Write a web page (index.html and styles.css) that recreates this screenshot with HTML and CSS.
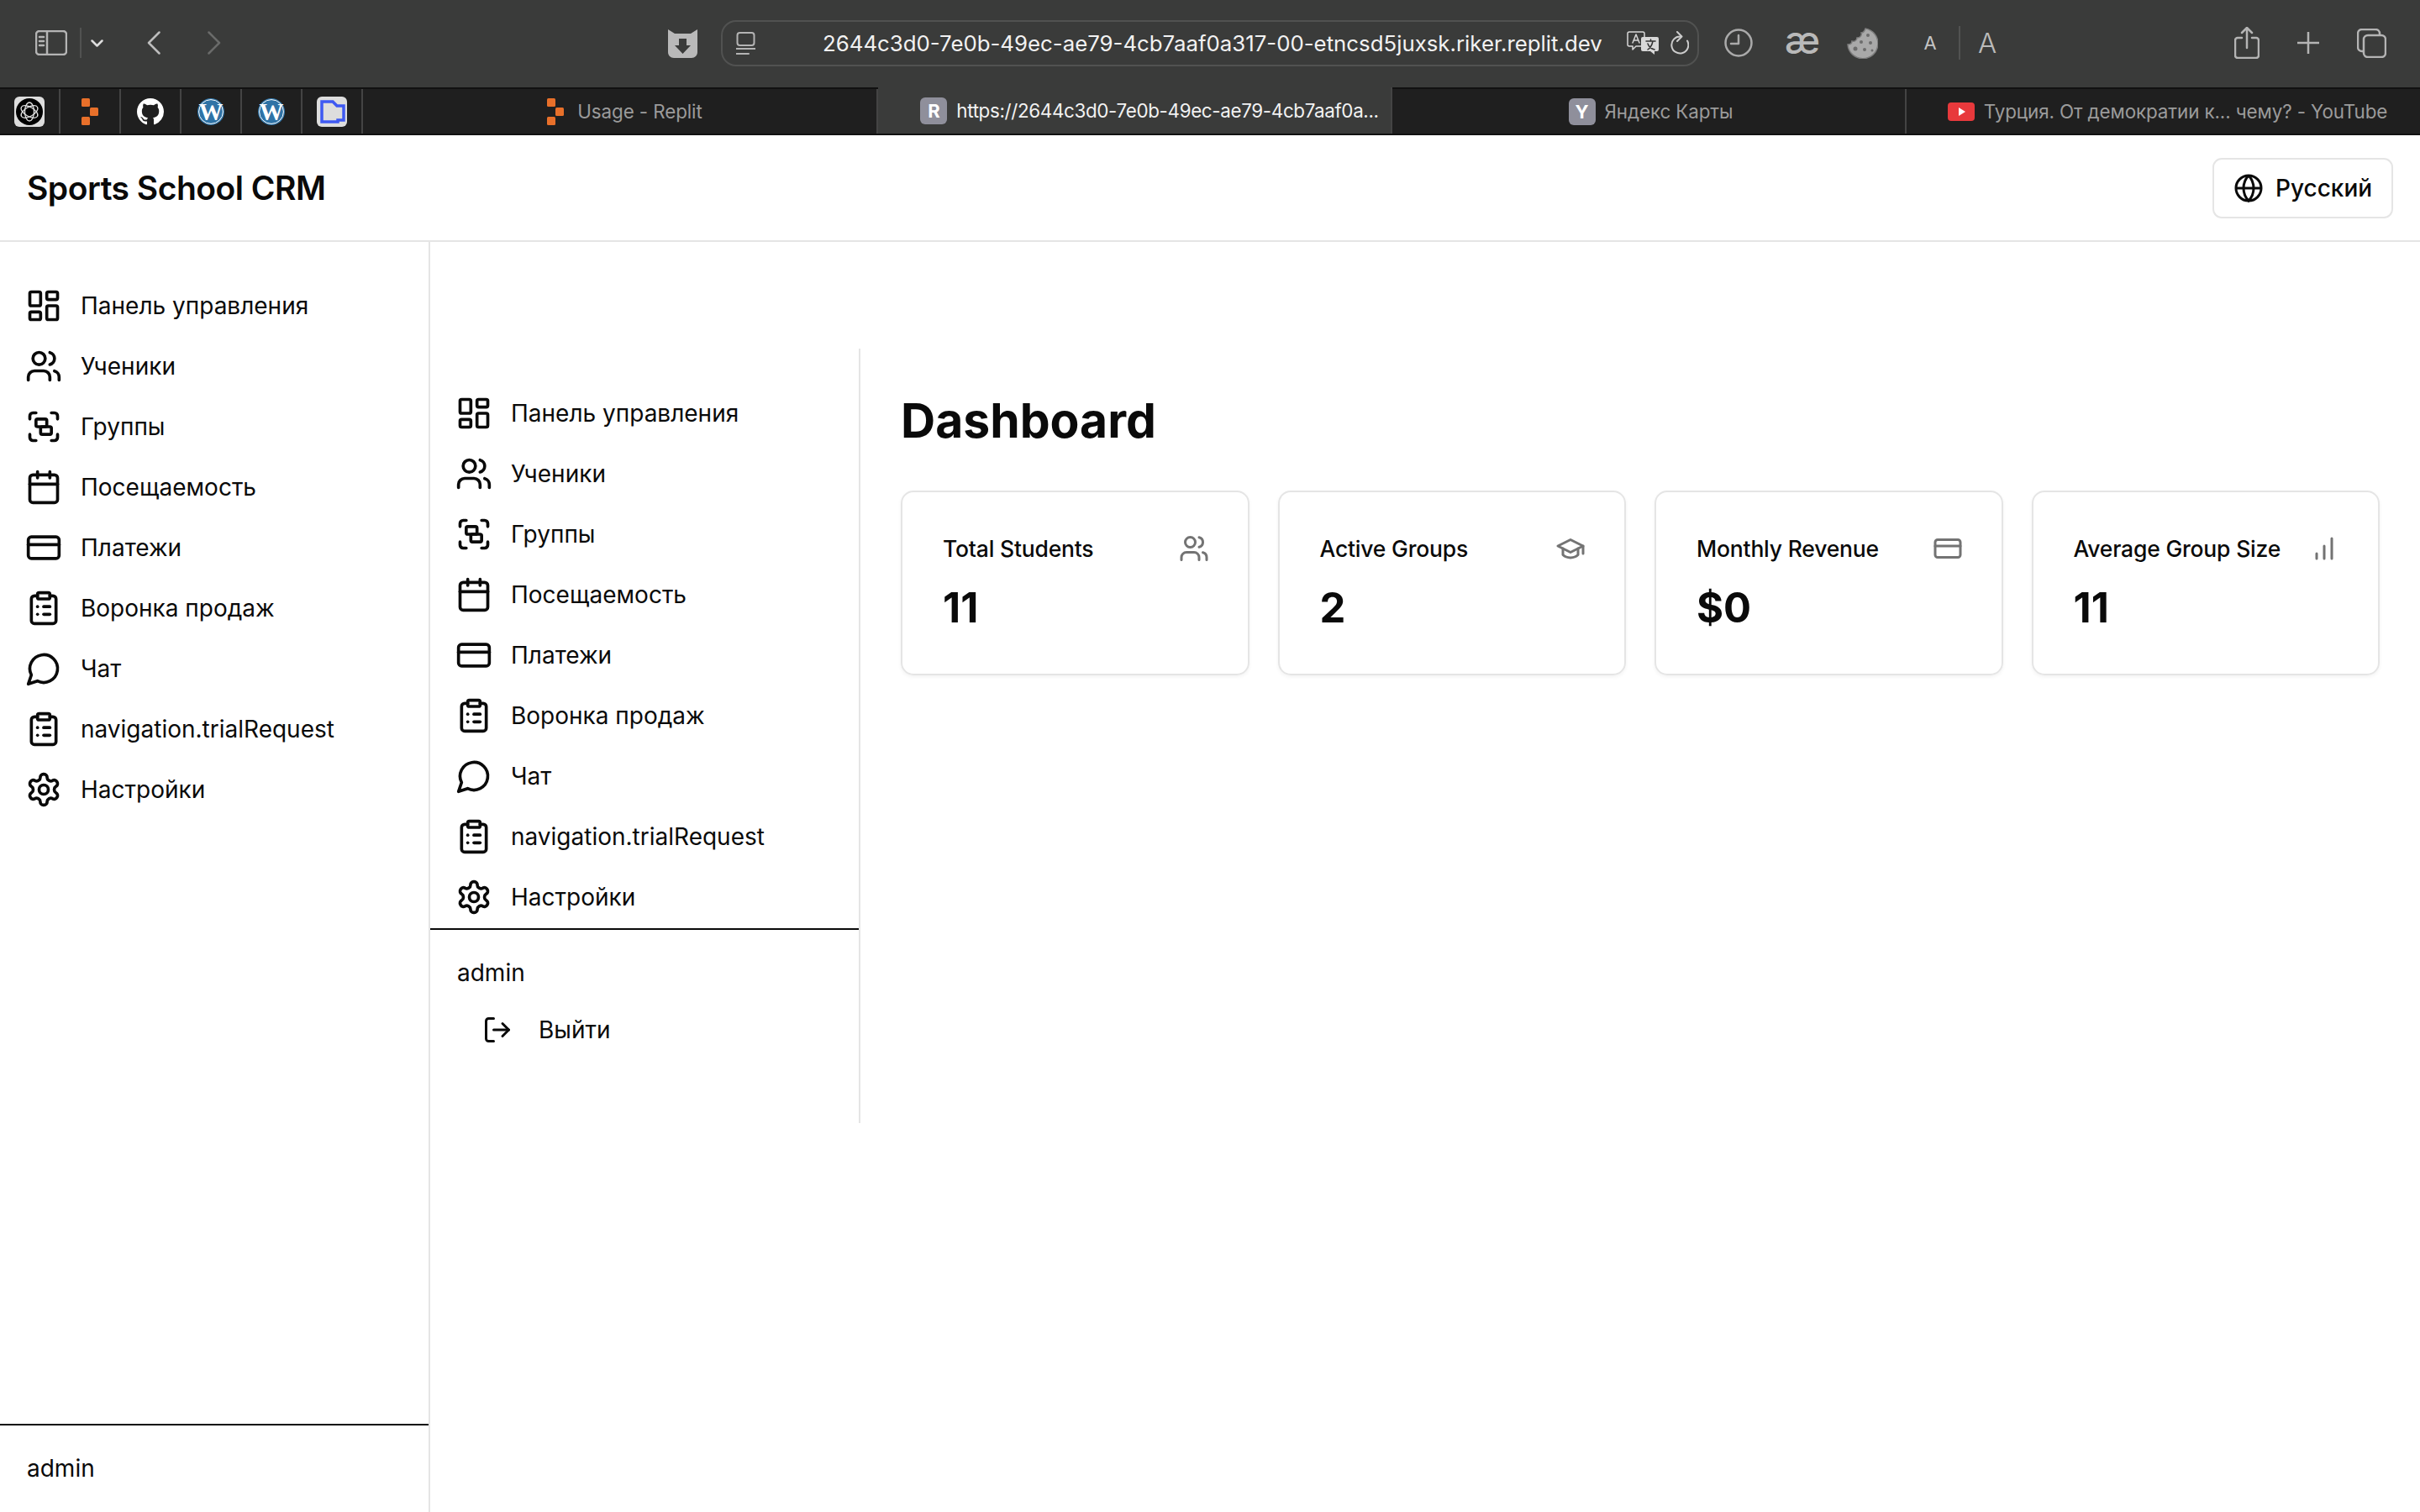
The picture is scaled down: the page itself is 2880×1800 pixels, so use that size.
FILE: index.html
```html
<!DOCTYPE html>
<html lang="ru">
<head>
    <meta charset="UTF-8">
    <title>Sports School CRM</title>
    <link rel="stylesheet" href="styles.css">
</head>
<body>
<svg class="sprite" xmlns="http://www.w3.org/2000/svg">
    <symbol id="i-dashboard" viewBox="0 0 24 24"><rect x="3" y="3" width="7" height="9" rx="1"/><rect x="14" y="3" width="7" height="5" rx="1"/><rect x="14" y="12" width="7" height="9" rx="1"/><rect x="3" y="16" width="7" height="5" rx="1"/></symbol>
    <symbol id="i-users" viewBox="0 0 24 24"><path d="M16 21v-2a4 4 0 0 0-4-4H6a4 4 0 0 0-4 4v2"/><circle cx="9" cy="7" r="4"/><path d="M22 21v-2a4 4 0 0 0-3-3.87"/><path d="M16 3.13a4 4 0 0 1 0 7.75"/></symbol>
    <symbol id="i-group" viewBox="0 0 24 24"><path d="M3 7V5c0-1.1.9-2 2-2h2"/><path d="M17 3h2c1.1 0 2 .9 2 2v2"/><path d="M21 17v2c0 1.1-.9 2-2 2h-2"/><path d="M7 21H5c-1.1 0-2-.9-2-2v-2"/><rect x="7" y="7" width="7" height="5" rx="1"/><rect x="10" y="12" width="7" height="5" rx="1"/></symbol>
    <symbol id="i-calendar" viewBox="0 0 24 24"><path d="M8 2v4"/><path d="M16 2v4"/><rect x="3" y="4" width="18" height="18" rx="2"/><path d="M3 10h18"/></symbol>
    <symbol id="i-card" viewBox="0 0 24 24"><rect x="2" y="5" width="20" height="14" rx="2"/><path d="M2 10h20"/></symbol>
    <symbol id="i-clipboard" viewBox="0 0 24 24"><rect x="8" y="2" width="8" height="4" rx="1"/><path d="M16 4h2a2 2 0 0 1 2 2v14a2 2 0 0 1-2 2H6a2 2 0 0 1-2-2V6a2 2 0 0 1 2-2h2"/><path d="M12 11h4"/><path d="M12 16h4"/><path d="M8 11h.01"/><path d="M8 16h.01"/></symbol>
    <symbol id="i-chat" viewBox="0 0 24 24"><path d="M7.9 20A9 9 0 1 0 4 16.1L2 22Z"/></symbol>
    <symbol id="i-settings" viewBox="0 0 24 24"><path d="M12.22 2h-.44a2 2 0 0 0-2 2v.18a2 2 0 0 1-1 1.73l-.43.25a2 2 0 0 1-2 0l-.15-.08a2 2 0 0 0-2.73.73l-.22.38a2 2 0 0 0 .73 2.73l.15.1a2 2 0 0 1 1 1.72v.51a2 2 0 0 1-1 1.74l-.15.09a2 2 0 0 0-.73 2.73l.22.38a2 2 0 0 0 2.73.73l.15-.08a2 2 0 0 1 2 0l.43.25a2 2 0 0 1 1 1.73V20a2 2 0 0 0 2 2h.44a2 2 0 0 0 2-2v-.18a2 2 0 0 1 1-1.73l.43-.25a2 2 0 0 1 2 0l.15.08a2 2 0 0 0 2.73-.73l.22-.39a2 2 0 0 0-.73-2.73l-.15-.08a2 2 0 0 1-1-1.74v-.5a2 2 0 0 1 1-1.74l.15-.09a2 2 0 0 0 .73-2.73l-.22-.38a2 2 0 0 0-2.73-.73l-.15.08a2 2 0 0 1-2 0l-.43-.25a2 2 0 0 1-1-1.73V4a2 2 0 0 0-2-2z"/><circle cx="12" cy="12" r="3"/></symbol>
    <symbol id="i-logout" viewBox="0 0 24 24"><path d="M9 21H5a2 2 0 0 1-2-2V5a2 2 0 0 1 2-2h4"/><path d="M16 17l5-5-5-5"/><path d="M21 12H9"/></symbol>
    <symbol id="i-globe" viewBox="0 0 24 24"><circle cx="12" cy="12" r="10"/><path d="M12 2a14.5 14.5 0 0 0 0 20 14.5 14.5 0 0 0 0-20"/><path d="M2 12h20"/></symbol>
    <symbol id="i-cap" viewBox="0 0 24 24"><path d="M22 10v6"/><path d="M2 10l10-5 10 5-10 5z"/><path d="M6 12v5c3 3 9 3 12 0v-5"/></symbol>
    <symbol id="i-bars" viewBox="0 0 24 24"><path d="M12 20V10"/><path d="M18 20V4"/><path d="M6 20v-4"/></symbol>
    <symbol id="i-replit" viewBox="0 0 20 32"><rect x="0" y="0" width="10" height="10" rx="1.5"/><rect x="10" y="11" width="10" height="10" rx="1.5"/><rect x="0" y="22" width="10" height="10" rx="1.5"/></symbol>
    <symbol id="i-wp" viewBox="0 0 32 32"><circle cx="16" cy="16" r="16" fill="#2f73a6"/><circle cx="16" cy="16" r="14.4" fill="none" stroke="#fff" stroke-width="1"/><text x="16" y="25.500" text-anchor="middle" class="wp-letter">W</text></symbol>
</svg>

<div class="toolbar">
    <svg class="tb tb-sidebar" viewBox="0 0 38 30"><rect x="1" y="1" width="36" height="28" rx="4"/><path d="M14 1v28"/><path d="M5 8h5M5 13h5M5 18h5"/></svg>
    <span class="tb-sep"></span>
    <svg class="tb tb-chevron" viewBox="0 0 15 9"><path d="M1.5 1.5l6 6 6-6"/></svg>
    <svg class="tb tb-back" viewBox="0 0 16 28"><path d="M14.5 1.5L2 14l12.5 12.5"/></svg>
    <svg class="tb tb-forward" viewBox="0 0 16 28"><path d="M1.5 1.5L14 14 1.5 26.500"/></svg>
    <svg class="tb-fill tb-shield" viewBox="0 0 35 35"><path d="M0 1l8 5h19l8-5v27c0 4-3 7-7 7H7c-4 0-7-3-7-7z"/><path class="cut" d="M13 12h9v8h5l-9.500 10L8 20h5z"/></svg>
    <div class="urlbar">
        <svg class="tb tb-site" viewBox="0 0 23 27"><rect x="1.500" y="1" width="20" height="15" rx="3"/><path d="M0 20h23M0 26h15"/></svg>
        <span class="url">2644c3d0-7e0b-49ec-ae79-4cb7aaf0a317-00-etncsd5juxsk.riker.replit.dev</span>
        <svg class="tb tb-translate" viewBox="0 0 38 28"><path d="M3 1h16a2 2 0 0 1 2 2v13a2 2 0 0 1-2 2H11l-4 4v-4H3a2 2 0 0 1-2-2V3a2 2 0 0 1 2-2z"/><path class="solid" d="M19 7h17a2 2 0 0 1 2 2v13a2 2 0 0 1-2 2h-3v4l-5-4h-9a2 2 0 0 1-2-2V9a2 2 0 0 1 2-2z"/><path class="ink" d="M23 12h11M28.500 10v2M25 22c3-2 5-5 6-10M25 15c1 3 4 6 8 7"/><path d="M7 14l4-10 4 10M8.500 11h5"/></svg>
        <svg class="tb tb-reload" viewBox="0 0 23 28"><path d="M13 6.500a10 10 0 1 0 8 5"/><path d="M9 1l5.500 5.500L9 12"/></svg>
    </div>
    <svg class="tb tb-clock" viewBox="0 0 34 34"><circle cx="17" cy="17" r="15.500"/><path d="M17 8v10H8"/></svg>
    <span class="tb-ae">æ</span>
    <svg class="tb-cookie" viewBox="0 0 37 37"><path class="cookie-body" d="M22 1a18 18 0 1 1-21 19c3 0 5-1 5-4 3 1 6-1 6-4 4 0 6-3 5-6 2 0 4-2 5-5z"/><circle cx="25" cy="9" r="2"/><circle cx="17" cy="17" r="2"/><circle cx="28" cy="18" r="2"/><circle cx="10" cy="25" r="2.500"/><circle cx="21" cy="26" r="2"/><circle cx="30" cy="27" r="1.500"/></svg>
    <span class="tb-a-small">A</span>
    <span class="tb-sep tb-sep-font"></span>
    <span class="tb-a-big">A</span>
    <svg class="tb tb-share" viewBox="0 0 30 38"><path d="M9 13H4a3 3 0 0 0-3 3v18a3 3 0 0 0 3 3h22a3 3 0 0 0 3-3V16a3 3 0 0 0-3-3h-5"/><path d="M15 25V1M9 7l6-6 6 6"/></svg>
    <svg class="tb tb-plus" viewBox="0 0 26 26"><path d="M13 0v26M0 13h26"/></svg>
    <svg class="tb tb-tabs" viewBox="0 0 35 35"><rect x="1" y="1" width="26" height="26" rx="5"/><rect class="solid-bg" x="8" y="8" width="26" height="26" rx="5"/></svg>
</div>

<div class="tabbar">
    <div class="pin">
        <span class="tile tile-light">
            <svg class="gpt" viewBox="0 0 32 32"><circle cx="16" cy="16" r="16" fill="#000"/><g fill="none" stroke="#ddd" stroke-width="1.300"><ellipse cx="16" cy="16" rx="5.500" ry="11"/><ellipse cx="16" cy="16" rx="5.500" ry="11" transform="rotate(60 16 16)"/><ellipse cx="16" cy="16" rx="5.500" ry="11" transform="rotate(120 16 16)"/></g></svg>
        </span>
    </div>
    <div class="pin"><svg class="replit-pin"><use href="#i-replit"/></svg></div>
    <div class="pin">
        <svg class="github" viewBox="0 0 16 16"><path d="M8 0C3.580 0 0 3.580 0 8c0 3.540 2.290 6.530 5.470 7.590.4.070.55-.170.55-.380 0-.190-.010-.820-.010-1.490-2.010.370-2.530-.490-2.690-.940-.090-.230-.480-.940-.820-1.130-.280-.150-.680-.520-.010-.530.630-.010 1.080.580 1.230.820.720 1.210 1.870.870 2.330.660.070-.520.280-.870.510-1.070-1.780-.2-3.640-.890-3.640-3.950 0-.870.310-1.590.82-2.150-.08-.2-.360-1.020.08-2.120 0 0 .670-.210 2.200.820.640-.180 1.320-.270 2-.270.680 0 1.360.090 2 .270 1.530-1.040 2.200-.820 2.200-.820.440 1.100.160 1.920.08 2.120.510.560.820 1.270.820 2.150 0 3.070-1.870 3.750-3.650 3.950.290.250.540.730.540 1.480 0 1.070-.010 1.930-.010 2.200 0 .210.150.460.550.380A8.013 8.013 0 0016 8c0-4.420-3.580-8-8-8z"/></svg>
    </div>
    <div class="pin"><svg class="wp"><use href="#i-wp"/></svg></div>
    <div class="pin"><svg class="wp"><use href="#i-wp"/></svg></div>
    <div class="pin">
        <span class="tile tile-light">
            <svg class="folder" viewBox="0 0 36 36"><path d="M6 6h13l5 5h8v17l-7 0v2H6z"/></svg>
        </span>
    </div>
    <div class="tab tab-usage"><svg class="replit-tab"><use href="#i-replit"/></svg><span>Usage - Replit</span></div>
    <div class="tab tab-active"><span class="letter">R</span><span>https://2644c3d0-7e0b-49ec-ae79-4cb7aaf0a...</span></div>
    <div class="tab tab-maps"><span class="letter">Y</span><span>Яндекс Карты</span></div>
    <div class="tab tab-last">
        <svg class="yt" viewBox="0 0 32 22"><rect width="32" height="22" rx="4" fill="#e8393c"/><path d="M13 6l8 5-8 5z" fill="#fff"/></svg>
        <span>Турция. От демократии к... чему? - YouTube</span>
    </div>
</div>

<header class="app-header">
    <h1 class="brand">Sports School CRM</h1>
    <button class="lang-btn" type="button"><svg class="icon-globe"><use href="#i-globe"/></svg>Русский</button>
</header>

<div class="layout">
    <aside class="sidebar">
        <nav class="nav">
            <a class="nav-item"><svg class="icon"><use href="#i-dashboard"/></svg>Панель управления</a>
            <a class="nav-item"><svg class="icon"><use href="#i-users"/></svg>Ученики</a>
            <a class="nav-item"><svg class="icon"><use href="#i-group"/></svg>Группы</a>
            <a class="nav-item"><svg class="icon"><use href="#i-calendar"/></svg>Посещаемость</a>
            <a class="nav-item"><svg class="icon"><use href="#i-card"/></svg>Платежи</a>
            <a class="nav-item"><svg class="icon"><use href="#i-clipboard"/></svg>Воронка продаж</a>
            <a class="nav-item"><svg class="icon"><use href="#i-chat"/></svg>Чат</a>
            <a class="nav-item"><svg class="icon"><use href="#i-clipboard"/></svg>navigation.trialRequest</a>
            <a class="nav-item"><svg class="icon"><use href="#i-settings"/></svg>Настройки</a>
        </nav>
        <div class="side-footer side-footer-short">
            <div class="user">admin</div>
        </div>
    </aside>

    <div class="page">
        <div class="page-inner">
            <aside class="sidebar sidebar-inner">
                <nav class="nav">
                    <a class="nav-item"><svg class="icon"><use href="#i-dashboard"/></svg>Панель управления</a>
                    <a class="nav-item"><svg class="icon"><use href="#i-users"/></svg>Ученики</a>
                    <a class="nav-item"><svg class="icon"><use href="#i-group"/></svg>Группы</a>
                    <a class="nav-item"><svg class="icon"><use href="#i-calendar"/></svg>Посещаемость</a>
                    <a class="nav-item"><svg class="icon"><use href="#i-card"/></svg>Платежи</a>
                    <a class="nav-item"><svg class="icon"><use href="#i-clipboard"/></svg>Воронка продаж</a>
                    <a class="nav-item"><svg class="icon"><use href="#i-chat"/></svg>Чат</a>
                    <a class="nav-item"><svg class="icon"><use href="#i-clipboard"/></svg>navigation.trialRequest</a>
                    <a class="nav-item"><svg class="icon"><use href="#i-settings"/></svg>Настройки</a>
                </nav>
                <div class="side-footer">
                    <div class="user">admin</div>
                    <a class="logout"><svg class="icon-logout"><use href="#i-logout"/></svg>Выйти</a>
                </div>
            </aside>

            <main class="main">
                <h2 class="title">Dashboard</h2>
                <div class="cards">
                    <div class="card">
                        <div class="card-head"><span>Total Students</span><svg class="card-icon"><use href="#i-users"/></svg></div>
                        <div class="card-value">11</div>
                    </div>
                    <div class="card">
                        <div class="card-head"><span>Active Groups</span><svg class="card-icon"><use href="#i-cap"/></svg></div>
                        <div class="card-value">2</div>
                    </div>
                    <div class="card">
                        <div class="card-head"><span>Monthly Revenue</span><svg class="card-icon"><use href="#i-card"/></svg></div>
                        <div class="card-value">$0</div>
                    </div>
                    <div class="card">
                        <div class="card-head"><span>Average Group Size</span><svg class="card-icon"><use href="#i-bars"/></svg></div>
                        <div class="card-value">11</div>
                    </div>
                </div>
            </main>
        </div>
    </div>
</div>
</body>
</html>
```

FILE: styles.css
```css
* {
    box-sizing: border-box;
}
html, body {
    margin: 0;
    height: 100%;
}
body {
    width: 2880px;
    height: 1800px;
    overflow: hidden;
    background: #fff;
    color: #0a0a0a;
    font-family: Inter, "Noto Sans", sans-serif;
}
.sprite {
    display: none;
}

/* browser chrome */
.toolbar {
    display: flex;
    align-items: center;
    height: 106px;
    padding: 0 0 2px 42px;
    background: #3a3b3a;
    border-bottom: 2px solid #111;
}
.tb {
    flex: none;
    fill: none;
    stroke: #b4b4b4;
    stroke-width: 2.5;
    stroke-linecap: round;
    stroke-linejoin: round;
}
.tb-fill {
    flex: none;
    fill: #b9b9b9;
}
.tb-sidebar { width: 38px; height: 30px; }
.tb-sep {
    flex: none;
    width: 2px;
    height: 36px;
    margin-left: 15px;
    background: #515251;
}
.tb-chevron { width: 15px; height: 9px; margin-left: 11px; stroke: #ddd; }
.tb-back { width: 16px; height: 28px; margin-left: 52px; stroke: #bdbdbd; }
.tb-forward { width: 16px; height: 28px; margin-left: 56px; stroke: #6a6b6a; }
.tb-shield { width: 35px; height: 35px; margin-left: 532px; }
.tb-shield .cut { fill: #3a3b3a; }
.urlbar {
    flex: none;
    display: flex;
    align-items: center;
    width: 1164px;
    height: 55px;
    margin-left: 28px;
    padding-left: 16px;
    border: 2px solid #515251;
    border-radius: 18px;
}
.tb-site { width: 23px; height: 27px; stroke-width: 2; }
.url {
    flex: none;
    width: 926px;
    margin-left: 80px;
    color: #f2f2f2;
    font-size: 25.800px;
    white-space: nowrap;
}
.tb-translate { width: 38px; height: 28px; margin-left: 31px; stroke-width: 1.500; stroke: #d8d8d8; }
.tb-translate .solid { fill: #d8d8d8; stroke: none; }
.tb-translate .ink { stroke: #333; stroke-width: 1.500; }
.tb-reload { width: 23px; height: 28px; margin-left: 13px; stroke-width: 2; stroke: #ccc; }
.tb-clock { width: 34px; height: 34px; margin-left: 30px; stroke: #aaa; }
.tb-ae {
    flex: none;
    width: 36px;
    margin-left: 38px;
    color: #b9b9b9;
    font-size: 46px;
    font-weight: 500;
    line-height: 46px;
    text-align: center;
    position: relative;
    top: -4px;
}
.tb-cookie { flex: none; width: 37px; height: 37px; margin-left: 38px; fill: #6c6c6c; }
.tb-cookie .cookie-body { fill: #a9a9a9; stroke: #7d7d7d; stroke-width: 1.500; }
.tb-a-small {
    flex: none;
    width: 16px;
    margin-left: 54px;
    color: #c4c4c4;
    font-size: 22px;
    text-align: center;
}
.tb-sep-font { height: 40px; margin-left: 26px; }
.tb-a-big {
    flex: none;
    width: 22px;
    margin-left: 21px;
    color: #bbb;
    font-size: 33px;
    font-weight: 300;
    text-align: center;
}
.tb-share { width: 30px; height: 38px; margin-left: 283px; }
.tb-plus { width: 26px; height: 26px; margin-left: 45px; }
.tb-tabs { width: 35px; height: 35px; margin-left: 45px; }
.tb-tabs .solid-bg { fill: #3a3b3a; }

.tabbar {
    display: flex;
    height: 55px;
    background: #1f1f1f;
    border-bottom: 2px solid #111;
}
.pin {
    flex: none;
    display: flex;
    align-items: center;
    justify-content: center;
    width: 72px;
    border-right: 2px solid #444;
}
.tile {
    display: flex;
    align-items: center;
    justify-content: center;
    width: 36px;
    height: 36px;
    background: #ddd;
    border-radius: 6px;
}
.gpt { width: 32px; height: 32px; }
.folder { width: 36px; height: 36px; fill: none; stroke: #3e59f2; stroke-width: 3.500; }
.replit-pin { width: 20px; height: 32px; fill: #e8702a; }
.replit-tab { width: 20px; height: 32px; fill: #e8702a; }
.github { width: 32px; height: 32px; fill: #fff; }
.wp { width: 32px; height: 32px; }
.wp-letter {
    fill: #fff;
    font-family: "Liberation Serif", serif;
    font-size: 29px;
    font-weight: 700;
}
.tab {
    flex: none;
    display: flex;
    align-items: center;
    justify-content: center;
    gap: 11px;
    width: 612px;
    color: #9b9b9b;
    font-size: 22.400px;
    letter-spacing: -0.1px;
    white-space: nowrap;
    border-right: 2px solid #444;
}
.tab-usage {
    width: 613px;
    gap: 16px;
    padding-left: 12px;
}
.tab-active {
    background: #3a3b3a;
    color: #f2f2f2;
    margin-top: -2px;
    padding-left: 36px;
    letter-spacing: -0.35px;
}
.tab-maps {
    padding-left: 5px;
}
.tab-last {
    width: auto;
    flex: 1;
    padding-left: 10px;
    border-right: none;
}
.letter {
    display: flex;
    align-items: center;
    justify-content: center;
    width: 32px;
    height: 32px;
    background: #8f8f9b;
    border-radius: 6px;
    color: #fff;
    font-size: 22px;
    font-weight: 700;
}
.yt { width: 32px; height: 22px; }

/* app header */
.app-header {
    display: flex;
    align-items: center;
    justify-content: space-between;
    height: 127px;
    padding: 0 32px;
    border-bottom: 2px solid #e5e5e5;
}
.brand {
    margin: 0;
    font-size: 39px;
    font-weight: 600;
    letter-spacing: -0.5px;
}
.lang-btn {
    display: flex;
    align-items: center;
    gap: 14px;
    width: 215px;
    height: 72px;
    padding: 0 0 0 23px;
    background: #fff;
    border: 2px solid #e5e5e5;
    border-radius: 11px;
    color: #0a0a0a;
    font-family: inherit;
    font-size: 28px;
    font-weight: 500;
}
.icon-globe {
    width: 36px;
    height: 36px;
    fill: none;
    stroke: #0a0a0a;
    stroke-width: 2;
    flex: none;
}

/* layout */
.layout {
    display: flex;
    height: 1512px;
}
.sidebar {
    flex: none;
    display: flex;
    flex-direction: column;
    width: 512px;
    border-right: 2px solid #e5e5e5;
}
.sidebar-inner {
    height: 922px;
}
.nav {
    flex: 1;
    padding-top: 40px;
}
.sidebar-inner .nav {
    padding-top: 41px;
}
.nav-item {
    display: flex;
    align-items: center;
    gap: 22px;
    height: 72px;
    padding-left: 30px;
    font-size: 28px;
    white-space: nowrap;
}
.icon {
    flex: none;
    width: 44px;
    height: 44px;
    fill: none;
    stroke: #0a0a0a;
    stroke-width: 2;
    stroke-linecap: round;
    stroke-linejoin: round;
}
.side-footer {
    flex: none;
    height: 232px;
    padding: 31px 32px 0;
    border-top: 2px solid #0a0a0a;
    font-size: 28px;
}
.side-footer-short {
    height: 105px;
}
.user {
    line-height: 40px;
}
.logout {
    display: flex;
    align-items: center;
    gap: 31px;
    height: 36px;
    margin-top: 30px;
    padding-left: 30px;
}
.icon-logout {
    flex: none;
    width: 36px;
    height: 36px;
    fill: none;
    stroke: #0a0a0a;
    stroke-width: 2;
    stroke-linecap: round;
    stroke-linejoin: round;
}
.page {
    flex: 1;
    padding-top: 127px;
}
.page-inner {
    display: flex;
    align-items: flex-start;
}
.main {
    flex: 1;
    padding: 0 48px;
}
.title {
    margin: 52px 0 49px;
    font-size: 57px;
    font-weight: 700;
    line-height: 68px;
}
.cards {
    display: grid;
    grid-template-columns: repeat(4, 1fr);
    gap: 34px;
}
.card {
    height: 220px;
    padding: 48px 46px 0 48px;
    border: 2px solid #e5e5e5;
    border-radius: 15px;
    box-shadow: 0 2px 4px rgba(0, 0, 0, 0.05);
}
.card-head {
    display: flex;
    align-items: center;
    justify-content: space-between;
    height: 38px;
    font-size: 26.500px;
    font-weight: 500;
    letter-spacing: -0.2px;
}
.card-icon {
    flex: none;
    width: 36px;
    height: 36px;
    fill: none;
    stroke: #737373;
    stroke-width: 2;
    stroke-linecap: round;
    stroke-linejoin: round;
}
.card-value {
    margin-top: 18px;
    font-size: 49px;
    font-weight: 700;
    line-height: 68px;
}
```
